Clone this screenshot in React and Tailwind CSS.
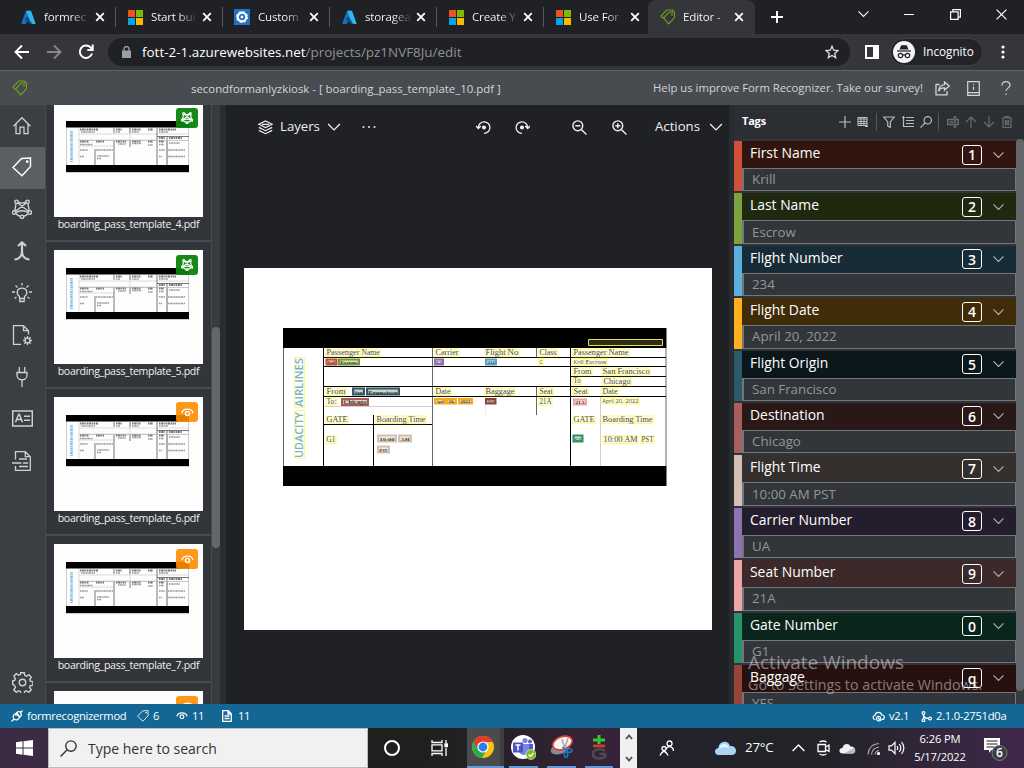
import React from "react";

function Svg({ w = 20, h = w, vb = `0 0 ${w} ${h}`, className = "", sw = 1.3, children }) {
  return (
    <svg width={w} height={h} viewBox={vb} fill="none" stroke="currentColor" strokeWidth={sw} className={`shrink-0 ${className}`}>
      {children}
    </svg>
  );
}

/* ---------- icons ---------- */
const Azure = () => (
  <svg width="15" height="15" viewBox="0 0 15 15" className="shrink-0">
    <path d="M5 .8h4.400L4.900 14H1.500q-1.300 0-1-1.200z" fill="#1b6fc0" />
    <path d="M9.600.8q.5 0 .7.6l4.200 11.800q.2.8-.7.8H9.500L5.300.8z" fill="#35b5f0" />
    <path d="M6.500 6.200 3.600 9.600 9.300 14h2z" fill="#0f4f96" />
  </svg>
);
const Microsoft = () => (
  <svg width="15" height="15" viewBox="0 0 15 15" className="shrink-0">
    <path d="M0 0h7v7H0z" fill="#f25022" /><path d="M8 0h7v7H8z" fill="#7fba00" />
    <path d="M0 8h7v7H0z" fill="#00a4ef" /><path d="M8 8h7v7H8z" fill="#ffb900" />
  </svg>
);
const Custom = () => (
  <svg width="16" height="16" viewBox="0 0 16 16" className="shrink-0">
    <path d="M0 0h16v16H0z" fill="#2272c4" />
    <circle cx="8" cy="8" r="4.300" fill="none" stroke="#fff" strokeWidth="2.200" />
    <circle cx="8" cy="8" r="5.600" fill="none" stroke="#fff" strokeWidth="1" strokeDasharray="2.2 2.2" />
    <circle cx="8" cy="8" r="1.400" fill="#fff" />
  </svg>
);
const DoubleTag = () => (
  <Svg w={16} className="text-[#6fa516]" sw={1.100}>
    <path d="M3.500 8.800 9.300 3h5.200v5.500L8.700 14.800z" /><path d="M3.300 9.300.9 7 6.800 1h6v2" /><circle cx="12" cy="5.500" r=".5" />
  </Svg>
);
const X = () => <Svg w={10} sw={1.800} className="text-white"><path d="m1.200 1.200 7.600 7.600m0-7.600L1.200 8.800" /></Svg>;
const Chevron = ({ w = 13, className = "" }) => (
  <Svg w={w} h={8} vb="0 0 13 8" className={className}><path d="m.6 1 5.900 5.900L12.400 1" /></Svg>
);
const TagIcon = ({ w = 20 }) => (
  <Svg w={w} vb="0 0 20 20" sw={1.400}><path d="m1 10.500 8.500-9L18.500 1v8.500L10 18.700z" /><circle cx="15.200" cy="4.600" r=".7" fill="currentColor" /></Svg>
);
const Model = ({ w = 20, sw = 1.400 }) => (
  <Svg w={w} vb="0 0 20 20" sw={sw}>
    <circle cx="4.500" cy="2.800" r="1.700" /><circle cx="15.500" cy="2.800" r="1.700" /><circle cx="2.200" cy="13.500" r="1.700" /><circle cx="17.800" cy="13.500" r="1.700" /><circle cx="10" cy="17.800" r="1.700" />
    <path d="M6.300 3.200Q10 5 13.700 3.200M4 4.700 2.800 11.800M16 4.700l1.200 7.100M5.700 4 16.500 12.300M14.300 4 3.500 12.300M4 13.500Q10 10 16 13.500M3.800 14.500Q6 17 8.300 17.300M16.200 14.500Q14 17 11.700 17.300" />
  </Svg>
);
const Eye = ({ w = 13, sw = 1.400 }) => (
  <Svg w={w} vb="0 0 14 14" sw={sw}><path d="M1 7.500C2.500 2 11.500 2 13 7.500" /><circle cx="7" cy="8" r="2.200" /></Svg>
);
const Search = ({ w = 12, sw = 1.300 }) => (
  <Svg w={w} vb="0 0 16 16" sw={sw}><circle cx="10.300" cy="5.700" r="4.900" /><path d="M6.800 9.200.5 15.500" /></Svg>
);

const sideIcons = [
  <Svg key="home"><path d="M1.500 11.200 10 2.700l8.500 8.500M4 9.200V18.700h4v-6.500h4v6.500h4V9.200" /></Svg>,
  <TagIcon key="tag" />,
  <Model key="model" />,
  <Svg key="merge" sw={2.200}><path d="M10 1v9.500C10 16 6 18.500 2.500 18.500M10 10.500c0 5.500 4 8 7.500 8M6 5 10 1.300 14 5" /></Svg>,
  <Svg key="bulb">
    <path d="M7.500 15.500v-2c-4-3-2.500-8.300 2.500-8.300s6.500 5.300 2.500 8.300v2zM7.800 15.500v3h4.400v-3M10 0v2.500M3.500 2.500l2 2M16.500 2.500l-2 2M0 9h3M17 9h3M2.500 15.500l2-1.500M17.500 15.500l-2-1.500" />
  </Svg>,
  <Svg key="doc">
    <path d="M9 19.300H1.500V.7h10l5 5v3.800M11.500.7v5h5" /><circle cx="15.500" cy="15.500" r="2.400" />
    <path d="M15.500 11v2m0 5v2M11 15.500h2m5 0h2M12.300 12.300l1.500 1.500m3.400 3.400 1.500 1.500m0-6.400-1.500 1.500m-3.400 3.400-1.500 1.500" />
  </Svg>,
  <Svg key="plug"><path d="M7.300 0v5M12.700 0v5M5 5.500h10v2.800c0 6-10 6-10 0zM10 13v7" /></Svg>,
  <Svg key="card" w={21}>
    <path d="M.7 3h19.600v15H.7zM3.500 14.300l3.200-8h.6l3.200 8M4.700 11.500h4.600M12 8.200h6M12 12.300h6" strokeWidth="1.500" />
  </Svg>,
  <Svg key="export"><path d="M3.500 8.500V.7h9.800l5 5v13.600H3.500V15M13.300.7v5h5M0 12h9.500M7 8h8M11 12h5M7 15.500h9" /></Svg>,
];

/* ---------- browser chrome ---------- */
const tabs = [
  [<Azure key="a" />, "formrec"],
  [<Microsoft key="b" />, "Start bui"],
  [<Custom key="c" />, "Custom"],
  [<Azure key="d" />, "storagea"],
  [<Microsoft key="e" />, "Create Y"],
  [<Microsoft key="f" />, "Use For"],
];

function TabStrip() {
  return (
    <div className="flex h-[34px] bg-[#202124] text-white">
      <div className="w-[9px]" />
      {tabs.map(([icon, label], i) => (
        <div key={i} className="flex h-[34px] w-[107px] items-center pl-[11px]">
          <div className="flex w-[16px] justify-center">{icon}</div>
          <div className="ml-[8px] w-[46px] bg-gradient-to-r from-white from-60% to-[#303134] bg-clip-text text-[11.600px] tracking-[-0.2px] whitespace-nowrap text-transparent">{label}</div>
          <div className="ml-[5px]"><X /></div>
          <div className={`ml-[10px] h-[20px] w-px ${i < 5 ? "bg-[#54565a]" : ""}`} />
        </div>
      ))}
      <div className="-ml-[3px] flex h-[34px] w-[107px] items-center rounded-t-[8px] bg-[#35363a] pl-[12px]">
        <DoubleTag />
        <div className="ml-[7px] w-[46px] bg-gradient-to-r from-white from-70% to-[#77787c] bg-clip-text text-[11.600px] tracking-[-0.2px] whitespace-nowrap text-transparent">Editor -</div>
        <div className="ml-[5px]"><X /></div>
      </div>
      <div className="flex flex-1 items-center">
        <Svg w={12} sw={1.900} className="ml-[16px]"><path d="M6 0v12M0 6h12" /></Svg>
        <div className="mb-[6px] flex flex-1 items-center">
          <Chevron w={11} className="ml-[75px]" />
          <div className="ml-[35px] h-px w-[10px] bg-white" />
          <Svg w={11} className="ml-[36px]" sw={1.200}><path d="M.6 2.900h7.500v7.500H.6zM2.900 2.900V.6h7.500v7.500H8.100" /></Svg>
          <Svg w={11} className="ml-[35px]" sw={1.200}><path d="m.6.6 9.800 9.800m0-9.800L.6 10.400" /></Svg>
        </div>
      </div>
    </div>
  );
}

function AddressBar() {
  return (
    <div className="flex h-[36px] items-center bg-[#35363a] text-white">
      <Svg w={16} className="ml-[14px]" sw={1.900}><path d="M15 8H1.500M8 1.500 1.500 8 8 14.500" /></Svg>
      <Svg w={16} className="ml-[16px] text-[#85878a]" sw={1.900}><path d="M1 8h13.500M8 1.500 14.500 8 8 14.500" /></Svg>
      <Svg w={16} className="ml-[16px]" sw={2}><path d="M14 9.500a6.200 6.200 0 1 1-1.500-6.100L14.500 5.500M14.700.5v5.500H9.300" /></Svg>
      <div className="ml-[14px] flex h-[28px] w-[742px] items-center rounded-full bg-[#202124] pl-[14px]">
        <svg width="9" height="13" viewBox="0 0 9 13" className="shrink-0"><path d="M0 4.500h9V12H0z" fill="#9aa0a6" /><path d="M2 5V3a2.500 2.500 0 0 1 5 0v2" fill="none" stroke="#9aa0a6" strokeWidth="1.300" /></svg>
        <div className="ml-[11px] flex-1 text-[13.450px] whitespace-nowrap">fott-2-1.azurewebsites.net<span className="text-[#8f9296]">/projects/pz1NVF8Ju/edit</span></div>
        <Svg w={14} className="mr-[11px] text-[#dcdde0]" sw={1.300}><path d="m7 1.300 1.700 3.900 4.200.4-3.200 2.800 1 4.200L7 10.400l-3.700 2.200 1-4.200-3.200-2.800 4.200-.4z" /></Svg>
      </div>
      <Svg w={14} className="ml-[15px]" sw={2}><path d="M1 1h12v12H1z" /><path d="M9 1h4v12H9z" fill="currentColor" /></Svg>
      <div className="ml-[11px] flex h-[28px] w-[93px] items-center rounded-full border border-[#3f4145] bg-[#232428] pl-[2px]">
        <svg width="22" height="22" viewBox="0 0 22 22" className="shrink-0">
          <circle cx="11" cy="11" r="11" fill="#f1f3f4" />
          <path d="m6.500 8.500 1.700-4.300h5.600l1.700 4.300z" fill="#202124" /><path d="M4 10h14" stroke="#202124" strokeWidth="1.200" />
          <g fill="none" stroke="#202124" strokeWidth="1.200"><circle cx="7.500" cy="14.500" r="2.200" /><circle cx="14.500" cy="14.500" r="2.200" /><path d="M9.700 14.200q1.300-.8 2.600 0" /></g>
        </svg>
        <span className="ml-[8px] text-[11.700px]">Incognito</span>
      </div>
      <svg width="4" height="14" viewBox="0 0 4 14" className="ml-[18px]" fill="#fff"><circle cx="2" cy="2" r="1.600" /><circle cx="2" cy="7" r="1.600" /><circle cx="2" cy="12" r="1.600" /></svg>
    </div>
  );
}

function AppHeader() {
  return (
    <div className="flex h-[35px] items-center border-t border-[#5f6265] bg-[#484b50] text-[#d4d5d6]">
      <div className="ml-[12px] w-[16px]"><DoubleTag /></div>
      <div className="ml-[163px] w-[462px] pt-[2px] text-[11.400px] whitespace-nowrap">secondformanlyzkiosk - [ boarding_pass_template_10.pdf ]</div>
      <div className="w-[270px] text-[11.300px] whitespace-nowrap">Help us improve Form Recognizer. Take our survey!</div>
      <Svg w={15} className="ml-[12px]" sw={1.300}><path d="M4.500 3.500H1v10.300h11V10M9.500 1l4.800 4-4.800 4V6.800Q5 6.500 3.500 10.500 4 4.300 9.500 3.700z" /></Svg>
      <Svg w={13} h={15} className="ml-[17px]" sw={1.200}><path d="M.7.7h11.600v13.600H.7zM.7 11.700h11.600M6.500 5.500V9M6.500 3v1" /></Svg>
      <Svg w={10} h={15} className="ml-[21px]" sw={1.200}><path d="M1 4.500C1-.5 9-.5 9 4c0 3-4 3.200-4 6M5 12.500V14" /></Svg>
    </div>
  );
}

/* ---------- thumbnails ---------- */
function MiniPass() {
  return (
    <svg width="123" height="52" viewBox="0 0 123 52">
      <path d="M0 0h123v51H0z" fill="#fdfdfd" stroke="#888" strokeWidth=".8" />
      <path d="M0 0h123v6.500H0zM0 44h123v7H0z" fill="#000" />
      <path d="M13 7v37M13 13h110M13 19h78M13 25h35M101 19v25M64 7v12" stroke="#d3d3d3" strokeWidth=".8" />
      <path d="M48 7v5M64 7v5M48 19v25M64 19v7M29 28v16M91 7v37M101 15v29M91 15.500h32" stroke="#555" strokeWidth=".8" />
      <path d="M13 19.500h110" stroke="#bbb" strokeWidth=".8" />
      <g stroke="#777" strokeWidth="1.800" strokeDasharray="1.500 .6 2.500 .7 1 .5">
        <path d="M14 8.500h18M50 8.500h6M66 8.500h9M82 8.500h5M93 8.500h17M14 20.500h9M30 20.500h8M50 20.500h10M66 20.500h9M82 20.500h5M93 20.500h5M103 17h13M93 17h6" />
      </g>
      <g stroke="#999" strokeWidth="1.300" strokeDasharray="1.500 .6 2.500 .6">
        <path d="M15 11h14M50 11h4M66 11h7M93 11h9M14 23.500h13M52 23h8M66 22.500h9M82 24h5M93 23.500h5M103 22h11M14 29h8M30 29h17M93 29h6M102 29h17M14 35.500h4M31 35h12M31 37.500h4M93 35.500h3M102 35.500h17" />
      </g>
      <path d="M5.500 41V10" stroke="#7cbce4" strokeWidth="2.600" strokeDasharray="1.200 .8 2 .6" />
    </svg>
  );
}

const thumbs = [
  ["boarding_pass_template_4.pdf", true],
  ["boarding_pass_template_5.pdf", true],
  ["boarding_pass_template_6.pdf", false],
  ["boarding_pass_template_7.pdf", false],
  ["", false],
];

function Thumbnails() {
  return (
    <div className="flex h-[599px] w-[181px] overflow-hidden">
      <div className="h-[599px] w-[167px] overflow-hidden border-x border-[#484b50] bg-[#32353a]">
        <div className="-mt-[10px]">
          {thumbs.map(([name, trained], i) => (
            <div key={i} className="flex h-[147px] flex-col items-center border-b-2 border-[#484b50] pt-[8px]">
              <div className="relative h-[114px] w-[149px] shrink-0 bg-[#fdfdfd] pt-[18px] pl-[12px]">
                <MiniPass />
                <div className={`absolute top-[5px] right-[5px] flex h-[20px] w-[22px] items-center justify-center rounded-[3px] text-white ${trained ? "bg-[#0c830c]/95" : "bg-[#ff8c00]/90"}`}>
                  {trained ? <Model w={12} sw={1.900} /> : <Eye w={13} sw={1.500} />}
                </div>
              </div>
              <div className="text-[10.600px] leading-[14px] tracking-[-0.32px] whitespace-nowrap text-[#f0f0f0]">{name}</div>
            </div>
          ))}
        </div>
      </div>
      <div className="w-[8px] bg-[#383b40] pt-[222px]"><div className="h-[221px] rounded-full bg-[#63676b]" /></div>
      <div className="flex-1 bg-[#292c30]" />
    </div>
  );
}

/* ---------- document ---------- */
/* x, y, width, height, text, kind (s: serif label, n: value) */
const words = [
  [326, 349, 34, 8, "Passenger", "s"], [361, 349, 19, 8, "Name", "s"],
  [435, 349, 24, 8, "Carrier", "s"], [485, 349, 21, 8, "Flight", "s"], [507, 349, 12, 8, "No", "s"],
  [539, 349, 18, 8, "Class", "s"], [573, 349, 34, 8, "Passenger", "s"], [608, 349, 21, 8, "Name", "s"],
  [539, 358.5, 4, 7, "C", "n"], [573, 358.5, 11, 7, "Krill", "n"], [585, 358.5, 22, 7, "Escrow", "n"],
  [573, 368, 19, 8, "From", "s"], [602, 368, 14, 8, "San", "s"], [617, 368, 33, 8, "Francisco", "s"],
  [573, 378, 8, 7, "To", "s"], [603, 378, 28, 8, "Chicago", "s"],
  [326, 388, 20, 8, "From", "s"], [435, 388, 16, 8, "Date", "s"], [485, 388, 30, 8, "Baggage", "s"],
  [539, 388, 14, 8, "Seat", "s"], [573, 388, 15, 8, "Seat", "s"], [602, 388, 16, 8, "Date", "s"],
  [326, 398, 11, 7.5, "To:", "s"], [539, 398, 13, 8, "21A", "s"],
  [602, 398, 12, 6.5, "April", "n"], [615, 398, 9, 6.5, "20,", "n"], [625, 398, 14, 6.5, "2022", "n"],
  [326, 416.5, 22, 7, "GATE", "s"], [376, 416, 31, 8, "Boarding", "s"], [408, 416, 18, 8, "Time", "s"],
  [573, 416.5, 22, 7, "GATE", "s"], [602, 416, 32, 8, "Boarding", "s"], [635, 416, 18, 8, "Time", "s"],
  [326, 436, 10, 8, "G1", "s"], [603, 436, 20, 8, "10:00", "s"], [624, 436, 14, 8, "AM", "s"], [641, 436, 13, 8, "PST", "s"],
];
const fields = [
  [325.5, 358.5, 12, 7, "Krill", "#cc4b32"], [338, 358.5, 22, 7, "Escrow", "#739c38"],
  [434, 358.5, 10, 7, "UA", "#8e6db5"], [485, 358.5, 12, 7, "234", "#4ca8d8"],
  [352, 387.5, 13, 8, "San", "#2f596b"], [366, 387.5, 34, 8, "Francisco", "#2f596b"],
  [341, 398, 28, 8, "Chicago", "#a85d5b"],
  [434, 398, 12, 6.5, "April", "#fba91c"], [446, 398, 11, 6.5, "20,", "#fba91c"], [458, 398, 15, 6.5, "2022", "#fba91c"],
  [485, 398, 11.5, 6.5, "YES", "#943f38"], [573, 398.5, 14, 7, "21A", "#efa2a4"],
  [377, 434.5, 20, 8, "10:00", "#d4bfb7"], [398, 434.5, 14, 8, "AM", "#d4bfb7"], [377, 445.5, 13, 8, "PST", "#d4bfb7"],
  [572.5, 434.5, 11, 8, "G1", "#289366"],
];

function BoardingPass() {
  return (
    <svg width="384" height="158" viewBox="283 328 384 158">
      <path d="M283 328h384v158H283z" fill="#fff" />
      <path d="M600.5 397v69M323 406.500h109" stroke="#d0d0d0" />
      <path d="M485.5 397v18" stroke="#ececec" />
      <path d="M432.5 348v118M536.5 348v10M536.5 387v28M283.5 348v118M666 348v118" stroke="#666" />
      <path d="M323.5 348v118M373.5 415v51M570.5 348v118M323 357.500h343M323 366.500h343M570 376.500h96M323 386.500h343M323 396.500h343M323 424.500h109" stroke="#000" />
      <path d="M283 328h383.500v20H283zM283 466h383.500v20H283z" fill="#000" />
      <path d="M588.5 339.500h74v6h-74z" fill="#2e2c14" stroke="#e4dc5c" />
      {words.map(([x, y, w, h, t, k], i) => (
        <g key={i}>
          <rect x={x} y={y} width={w} height={h - 0.5} fill="#fffee4" stroke="#fdf888" strokeWidth="1.200" />
          <text x={x + 0.5} y={y + h - 2} textLength={w - 1} lengthAdjust="spacingAndGlyphs" fill="#4a4a44" fontSize={k === "s" ? 8 : 6} fontFamily={k === "s" ? "Liberation Serif, serif" : "Open Sans, sans-serif"}>{t}</text>
        </g>
      ))}
      {fields.map(([x, y, w, h, t, c], i) => (
        <g key={i}>
          <rect x={x} y={y} width={w} height={h} fill={c} />
          <rect x={x + 2.2} y={y + 2} width={w - 4.4} height={h - 4} fill="#fffbe0" fillOpacity=".75" />
          <text x={x + 2.5} y={y + h - 2} textLength={w - 5} lengthAdjust="spacingAndGlyphs" fill="#333" fontSize={t === "Chicago" ? 6.5 : 5} fontWeight="bold" fontFamily="Liberation Serif, serif">{t}</text>
        </g>
      ))}
      <path d="M294.5 357.500h10v50h-10zM294.5 410.500h10v48h-10z" fill="#fffff2" stroke="#fcf98c" />
      <g transform="translate(303.300 458) rotate(-90)" fill="#79b3c9" fontFamily="Open Sans, sans-serif" fontSize="11" fontWeight="600">
        <text textLength="46" lengthAdjust="spacingAndGlyphs">UDACITY</text>
        <text x="51" textLength="49" lengthAdjust="spacingAndGlyphs">AIRLINES</text>
      </g>
    </svg>
  );
}

function Rotate({ flip }) {
  return (
    <Svg w={15} className={flip ? "-scale-x-100" : ""} sw={1.300}>
      <path d="M2.300 7.500A5.800 5.800 0 1 1 8 13.400M0 6l2.300 2.500L4.800 6" /><circle cx="8" cy="7.500" r="1.400" fill="currentColor" />
    </Svg>
  );
}

function Canvas() {
  return (
    <div className="flex h-[599px] w-[503px] flex-col bg-[#202124]">
      <div className="flex h-[44px] items-center text-[13.200px] text-[#f0f0f0]">
        <Svg w={15} className="ml-[32px]" sw={1.200}><path d="m.8 4.300 6.700-3.300 6.700 3.300-6.700 3.300zM.8 7.400l6.700 3.300 6.700-3.300M.8 10.400l6.700 3.300 6.700-3.300M4 4.300h7" /></Svg>
        <span className="ml-[7px] w-[39px]">Layers</span>
        <Chevron w={14} className="ml-[8px]" />
        <svg width="14" height="4" viewBox="0 0 14 4" className="ml-[21px]" fill="#ddd"><circle cx="1.500" cy="2" r="1.100" /><circle cx="7" cy="2" r="1.100" /><circle cx="12.500" cy="2" r="1.100" /></svg>
        <div className="ml-[100px]"><Rotate /></div>
        <div className="ml-[24px]"><Rotate flip /></div>
        <Svg w={15} className="ml-[42px]" sw={1.400}><circle cx="5.800" cy="5.800" r="4.900" /><path d="m9.400 9.400 5 5M3.300 5.800h5" /></Svg>
        <Svg w={15} className="ml-[25px]" sw={1.400}><circle cx="5.800" cy="5.800" r="4.900" /><path d="m9.400 9.400 5 5M3.300 5.800h5M5.800 3.300v5" /></Svg>
        <span className="ml-[28px] w-[46px]">Actions</span>
        <Chevron w={14} className="ml-[8px]" />
      </div>
      <div className="mt-[119px] ml-[18px] h-[362px] w-[468px] bg-white pt-[60px] pl-[39px]"><BoardingPass /></div>
    </div>
  );
}

/* ---------- tags ---------- */
const tags = [
  ["First Name", "1", "Krill", "bg-[#cf5139]", "bg-[#33150f]"],
  ["Last Name", "2", "Escrow", "bg-[#7da33f]", "bg-[#1f2910]"],
  ["Flight Number", "3", "234", "bg-[#5bb0db]", "bg-[#172c37]"],
  ["Flight Date", "4", "April 20, 2022", "bg-[#ffb01f]", "bg-[#402c08]"],
  ["Flight Origin", "5", "San Francisco", "bg-[#2d5a6b]", "bg-[#0b171b]"],
  ["Destination", "6", "Chicago", "bg-[#a85f5d]", "bg-[#2a1817]"],
  ["Flight Time", "7", "10:00 AM PST", "bg-[#d5bfb7]", "bg-[#35302e]"],
  ["Carrier Number", "8", "UA", "bg-[#8e73b3]", "bg-[#241d2d]"],
  ["Seat Number", "9", "21A", "bg-[#eea5a5]", "bg-[#3c2a2a]"],
  ["Gate Number", "0", "G1", "bg-[#27936b]", "bg-[#0a251b]"],
  ["Baggage", "q", "YES", "bg-[#98443a]", "bg-[#26110f]"],
];

function Tags() {
  return (
    <div className="flex h-[599px] w-[295px] flex-col overflow-hidden border-l-[5px] border-[#282b2f] bg-[#303338]">
      <div className="flex h-[34px] shrink-0 items-center bg-[#2b2e33] pb-[1px] text-[#b9bbbd]">
        <span className="ml-[8px] w-[26px] text-[11px] font-bold tracking-[-0.2px] whitespace-nowrap text-white">Tags</span>
        <Svg w={12} className="ml-[71px]" sw={1.200}><path d="M6 0v12M0 6h12" /></Svg>
        <Svg w={11} className="ml-[6px]" sw={1.100}><path d="M1 1.500h9v8H1zM1 3h9M1 5.500h9M1 7.500h9M4 2v7.500M7 2v7.500M8 10.500h3" /></Svg>
        <div className="ml-[8px] h-[18px] w-px bg-[#55585c]" />
        <Svg w={12} className="ml-[6px]" sw={1.200}><path d="M.8 1h10.400L7.300 6v5.500l-2.600-1.500V6z" /></Svg>
        <Svg w={12} className="ml-[7px]" sw={1.200}><path d="M1.500 0v11M0 1.500h3M4 1.500h8M4 4.500h8M4 7.500h8M1 10.500h11" /></Svg>
        <div className="ml-[6px]"><Search w={12} sw={1.600} /></div>
        <div className="ml-[6px] h-[18px] w-px bg-[#55585c]" />
        <div className="flex items-center text-[#696c70]">
          <Svg w={12} className="ml-[8px]" sw={1.300}><path d="M7 3.500H.7v5H7M9 3.500h2.300v5H9M8 1v10M6.500 1h3M6.500 11h3M2.500 6h4" strokeWidth="1.500" /></Svg>
          <Svg w={12} className="ml-[6px]" sw={1.200}><path d="M6 12V1M1 6l5-5 5 5" /></Svg>
          <Svg w={12} className="ml-[6px]" sw={1.200}><path d="M6 0v11M1 6l5 5 5-5" /></Svg>
          <Svg w={12} className="ml-[6px]" sw={1.200}><path d="M1 2h10M4 2V.6h4V2M2 2v9.500h8V2M4.500 4v5.500M6 4v5.500M7.500 4v5.500" /></Svg>
        </div>
      </div>
      <div className="flex h-[565px]">
        <div className="flex h-[565px] w-[282px] flex-col gap-[2px] overflow-hidden pt-[2px]">
          {tags.map(([name, key, value, color, dark]) => (
            <div key={name} className={`flex h-[50.400px] shrink-0 pl-[8px] ${color}`}>
              <div className="flex flex-1 flex-col">
                <div className={`flex h-[27px] items-center text-white ${dark}`}>
                  <span className="flex-1 pb-[2px] pl-[8px] text-[13.900px] whitespace-nowrap">{name}</span>
                  <span className="flex h-[20px] w-[20px] items-center justify-center rounded-[3px] border border-white text-[14px] font-semibold">{key}</span>
                  <Chevron w={11} className="mr-[12px] ml-[11px] text-[#b5b5b5]" />
                </div>
                <div className="flex flex-1 items-center border border-l-2 border-[#73767a] bg-[#32353a] pt-[1px] pl-[8px] text-[13.300px] whitespace-nowrap text-[#949698]">{value}</div>
              </div>
            </div>
          ))}
        </div>
        <div className="w-[8px] bg-[#383b40]"><div className="h-[552px] rounded-full bg-[#63676b]" /></div>
      </div>
    </div>
  );
}

/* ---------- bottom bars ---------- */
function StatusBar() {
  return (
    <div className="flex h-[24px] items-center bg-[#146694] text-[11.200px] text-white">
      <Svg w={12} className="ml-[11px]" sw={1.200}><path d="M.5 11.500 3 9M11.500.5 9 3M3 9C.5 6 3.500 4 5 3.500L8.500 7C8 8.500 6 11.500 3 9zM5.500 2.700C8 .5 9.500 2 10 3s1 2.500-1 4zM4 5h4" /></Svg>
      <span className="ml-[4px] w-[100px] tracking-[-0.28px]">formrecognizermod</span>
      <div className="ml-[10px]"><TagIcon w={12} /></div>
      <span className="ml-[4px] w-[7px]">6</span>
      <div className="ml-[16px]"><Eye w={12} sw={1.400} /></div>
      <span className="ml-[4px] w-[13px] tracking-[-0.3px]">11</span>
      <Svg w={10} h={12} className="ml-[17px]" sw={1.300}><path d="M.7.7h5.600l3 3v7.600H.7zM6 .7v3.300h3.300M2.500 6h5M2.500 8.500h5" /></Svg>
      <span className="ml-[6px] flex-1 tracking-[-0.3px]">11</span>
      <Svg w={13} sw={1.200}><path d="M3.500 9.500C.5 9.500.3 6 3 5.500 3.500 1.500 9 1.500 9.700 5c3.500-.2 3.500 4.500 0 4.500C8 12 4.500 11 4.500 8.500S8.500 5.500 8.500 8 6 9 6.500 7.500" /></Svg>
      <span className="ml-[4px] w-[20px] tracking-[-0.3px]">v2.1</span>
      <Svg w={11} className="ml-[12px]" sw={1.200}><circle cx="2.500" cy="2" r="1.400" /><circle cx="2.500" cy="9.200" r="1.400" /><circle cx="9" cy="7.500" r="1.400" /><path d="M2.500 3.500v4.200M2.500 4q1 3.500 5 3.500" /></Svg>
      <span className="mr-[17px] ml-[4px] w-[71px] tracking-[-0.25px] whitespace-nowrap">2.1.0-2751d0a</span>
    </div>
  );
}

const ChromeLogo = () => (
  <svg width="22" height="22" viewBox="0 0 22 22">
    <circle cx="11" cy="11" r="11" fill="#fbc116" />
    <path d="M1.500 5.500A11 11 0 0 0 10 22l5-9-4-2z" fill="#2da94f" />
    <path d="M11 6h9.800A11 11 0 0 0 1.500 5.500L6.500 13z" fill="#e33b2e" />
    <circle cx="11" cy="11" r="5.600" fill="#fff" /><circle cx="11" cy="11" r="4.400" fill="#2d7de8" />
  </svg>
);
const Teams = () => (
  <svg width="25" height="25" viewBox="0 0 25 25">
    <circle cx="12" cy="12" r="12" fill="#fff" /><circle cx="19" cy="6.500" r="2" fill="#5b60c8" /><circle cx="14" cy="5.500" r="2.600" fill="#7b83eb" />
    <path d="M16 9h6v6q0 3-4 3z" fill="#5059c9" /><path d="M8 9h10v7q-1 4-5 4t-5-4z" fill="#7b83eb" /><path d="M2 7.500h10v10H2z" fill="#4b53bc" />
    <path d="M4.500 10h5M7 10v5.500" stroke="#fff" strokeWidth="1.500" /><circle cx="20" cy="19.500" r="5" fill="#7cb618" stroke="#fff" strokeWidth=".6" /><path d="m17.500 19.500 2 2 3-3.500" stroke="#fff" strokeWidth="1.500" fill="none" />
  </svg>
);
const Snip = () => (
  <svg width="24" height="24" viewBox="0 0 24 24">
    <ellipse cx="10" cy="14" rx="9.500" ry="5" fill="#8a8a90" transform="rotate(-15 10 14)" />
    <ellipse cx="12.500" cy="8" rx="10" ry="6.300" fill="#f4f4f4" stroke="#dc4036" strokeWidth="1.600" transform="rotate(-20 12.500 8)" />
    <path d="m12 4 3 10M18 3l-3.500 11" stroke="#a8a8ac" strokeWidth="1.500" />
    <g fill="none" stroke="#1b78c0" strokeWidth="1.600"><ellipse cx="19" cy="15.500" rx="3" ry="1.800" /><ellipse cx="16" cy="19.500" rx="1.700" ry="2.800" /><path d="m12.500 12 4 4.500" /></g>
  </svg>
);

function Taskbar() {
  return (
    <div className="flex h-[40px] bg-gradient-to-r from-[#1f201e] from-42% via-[#36233b] via-60% to-[#38233c] text-white">
      <div className="flex w-[48px] items-center justify-center bg-[#3d2a43]">
        <svg width="17" height="16" viewBox="0 0 17 16" fill="#fff"><path d="M0 2.300 6.500 1.300v6.200H0zM7.500 1.200 17 0v7.500H7.500zM0 8.500h6.500v6.200L0 13.800zM7.500 8.500H17V16l-9.500-1.200z" /></svg>
      </div>
      <div className="flex w-[320px] items-center border border-[#bcbcbc] bg-[#f1f1f1] pl-[11px] text-[#333]">
        <Search w={17} sw={1.300} /><span className="ml-[11px] pt-[1px] text-[14px]">Type here to search</span>
      </div>
      <div className="flex w-[99px] items-center">
        <div className="ml-[16px] h-[16px] w-[16px] rounded-full border-[2px] border-white" />
        <Svg w={17} h={16} className="ml-[31px]" sw={1.300}><path d="M1 0v2.500h10V0M1 4.800h10v6H1zM1 16v-2.500h10V16M15 0v3M15 8v8" /><path d="M14 4h2.500v2.500H14z" fill="currentColor" /></Svg>
      </div>
      <div className="flex w-[37px] flex-col border-r-4 border-[#3e3e40] bg-[#4b4b4b]">
        <div className="flex flex-1 items-center pl-[5px]"><ChromeLogo /></div><div className="-mr-[4px] h-[2px] bg-[#6198db]" />
      </div>
      <div className="ml-[5px] flex w-[29px] flex-col"><div className="flex flex-1 items-center justify-center"><Teams /></div><div className="h-[2px] bg-[#6198db]" /></div>
      <div className="ml-[9px] flex w-[29px] flex-col"><div className="flex flex-1 items-center justify-center"><Snip /></div><div className="h-[2px] bg-[#6198db]" /></div>
      <div className="ml-[9px] flex w-[28px] flex-col">
        <div className="flex flex-1 items-center justify-center">
          <svg width="16" height="25" viewBox="0 0 16 25"><path d="M6.500 0h3v3.500H14v3H9.500V9h-3V6.500H2v-3h4.500z" fill="#35c52c" /><path d="M2 9.500h12v2.800H2z" fill="#d83a2e" /><path d="M14 16q-3-2.500-8-1.500-4.500 1-4 5 .5 4 6 4 4 0 6-1.500V19H8.500" stroke="#4c4a4e" strokeWidth="2.600" fill="none" /></svg>
        </div>
        <div className="h-[2px] bg-[#6198db]" />
      </div>
      <div className="ml-[7px] flex w-[17px] flex-col items-center justify-between bg-[#f0f0f0] py-[6px] text-[#555]">
        <Svg w={8} h={6} sw={1.900}><path d="m1 5 3-3.500L7 5" /></Svg><Svg w={8} h={6} sw={1.900}><path d="M1 1l3 3.500L7 1" /></Svg>
      </div>
      <div className="flex flex-1 items-center bg-gradient-to-r from-[#22222b] via-[#232329] to-[#40274a]">
        <Svg w={16} className="ml-[22px]" sw={1.300}><circle cx="10.500" cy="3.500" r="2.500" /><path d="M6.800 9q3.700-5 7.500 0v2" /><circle cx="5" cy="8.500" r="2" /><path d="M1 15.500q4-8 8 0" /></Svg>
        <svg width="23" height="18" viewBox="0 0 23 18" className="ml-[39px] shrink-0"><path d="M5 16C0 16-.5 9.500 4.500 9 5 2 14 .5 16 7c7-1 8.500 9 1.500 9z" fill="#a9d4f6" /><path d="M5 10C6 4 13 3 15 9c-4-2-8-1-10 1z" fill="#e8f5fd" /></svg>
        <span className="ml-[8px] w-[29px] shrink-0 text-[13.300px] tracking-[-0.2px] whitespace-nowrap">27°C</span>
        <Svg w={13} h={8} className="ml-[18px]" sw={1.400}><path d="m.6 7 5.900-5.900L12.400 7" /></Svg>
        <Svg w={13} h={16} className="ml-[12px]" sw={1.300}><path d="M1 4.500h7.500v7H1zM8.500 7l3.500-2v6.500L8.500 9.500M2.500 2q3.500-2 7 0M2.500 14q3.500 2 7 0" /></Svg>
        <svg width="17" height="11" viewBox="0 0 17 11" className="ml-[9px] shrink-0"><path d="M4 10.500C-1 10.500-.5 5 3.500 5 4 .5 10-.5 11.500 3.500 17 3 18 10.500 13 10.500z" fill="#f0f0f0" /><path d="M5 10.500 15 5q2 2 1 4-1 1.500-3 1.500z" fill="#b9babc" /></svg>
        <Svg w={13} className="ml-[11px]" sw={1.200}><path d="M1 12.500Q1.500 2.500 12 1.500M4.500 12.500Q5 6 12 5M8 12.500Q8.500 9 12 8.500" stroke="#aaa" /><circle cx="11.500" cy="11.500" r="1" fill="#fff" /></Svg>
        <Svg w={17} h={14} className="ml-[8px]" sw={1.200}><path d="M1 4.800h2.500l3.500-3.500v11.400L3.500 9.200H1zM9 5q1.500 2 0 4M11.300 3q3 4 0 8M13.600 1.200q4.500 5.800 0 11.600" /></Svg>
        <div className="ml-[8px] w-[54px] shrink-0 text-center text-[11.200px] leading-[18px] tracking-[-0.15px] whitespace-nowrap"><div>6:26 PM</div><div>5/17/2022</div></div>
        <div className="relative ml-[17px] h-[26px] w-[26px] shrink-0">
          <svg width="26" height="26" viewBox="0 0 26 26"><path d="M0 3h16v12H7.500L5 18v-3H0z" fill="#fff" /><path d="M2.500 6h11M2.500 9h11M2.500 12h8" stroke="#222" /><circle cx="15.500" cy="18" r="7.500" fill="#3b3d42" stroke="#7b7d80" /></svg>
          <span className="absolute top-[9px] left-[12px] text-[12px] leading-[18px] font-semibold">6</span>
        </div>
      </div>
    </div>
  );
}

export default function App() {
  return (
    <div className="relative h-[768px] w-[1024px] overflow-hidden bg-[#202124] font-['Open_Sans','Noto_Sans',sans-serif]">
      <TabStrip />
      <AddressBar />
      <AppHeader />
      <div className="flex h-[599px]">
        <div className="flex w-[45px] flex-col bg-[#3b3e43] text-[#cfd0d1]">
          {sideIcons.map((icon, i) => (
            <div key={i} className={`flex h-[42px] items-center justify-center pr-[1px] pb-[3px] ${i === 1 ? "bg-[#5b5e63] text-white" : ""}`}>{icon}</div>
          ))}
          <div className="mt-auto flex h-[44px] items-center justify-center">
            <Svg w={21} vb="0 0 21 21" sw={1.400}>
              <circle cx="10.500" cy="10.500" r="3.200" />
              <path d="M8.700.8h3.600l.5 2.800 1.700.7 2.400-1.600 2.400 2.500-1.600 2.300.7 1.700 2.600.5v3.600l-2.700.4-.7 1.800 1.600 2.300-2.500 2.500-2.300-1.600-1.700.7-.5 2.700H8.800l-.4-2.700-1.800-.7-2.300 1.600-2.500-2.500 1.600-2.300-.7-1.700L.7 12.300V8.700l2-.4.7-1.800L1.800 4.200 4.300 1.700l2.300 1.600 1.700-.7z" />
            </Svg>
          </div>
        </div>
        <Thumbnails />
        <Canvas />
        <Tags />
      </div>
      <StatusBar />
      <Taskbar />
      <div className="pointer-events-none absolute top-[649px] left-[748px] whitespace-nowrap text-white/45">
        <div className="text-[19px] leading-[26px]">Activate Windows</div>
        <div className="text-[14.300px] leading-[20px]">Go to Settings to activate Windows.</div>
      </div>
    </div>
  );
}
